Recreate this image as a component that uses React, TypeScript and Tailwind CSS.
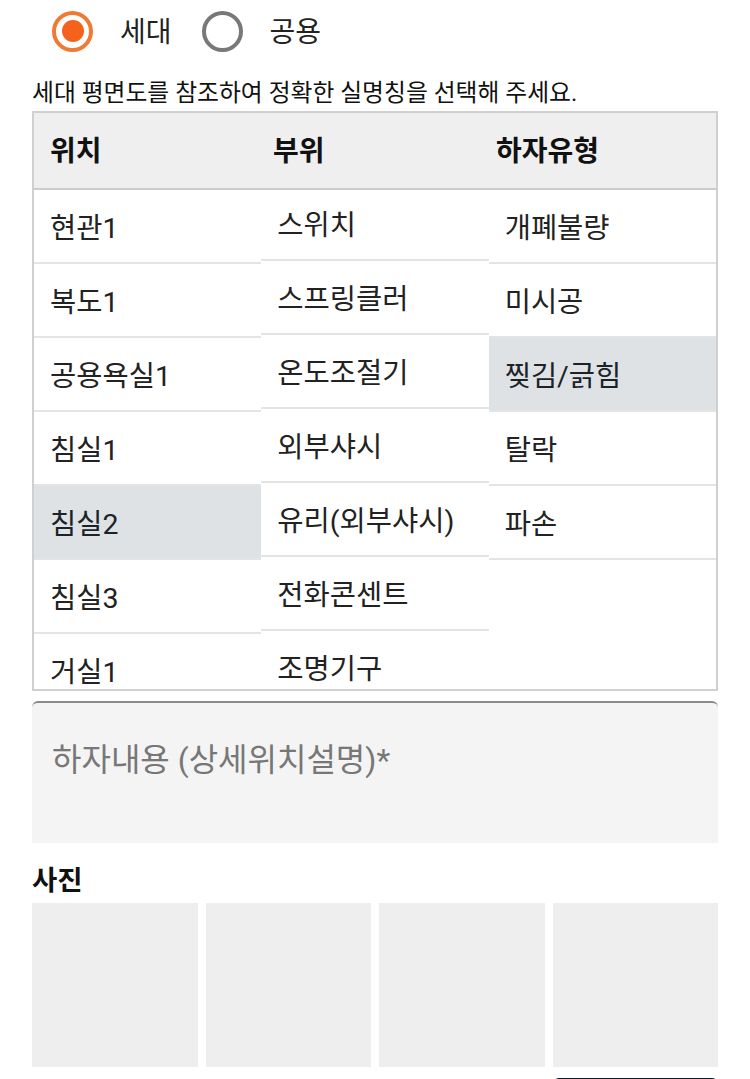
const locations = ["현관1", "복도1", "공용욕실1", "침실1", "침실2", "침실3", "거실1", "거실2"]
const parts = ["스위치", "스프링클러", "온도조절기", "외부샤시", "유리(외부샤시)", "전화콘센트", "조명기구", "콘센트"]
const defects = ["개폐불량", "미시공", "찢김/긁힘", "탈락", "파손"]

function Radio({ label, checked }: { label: string; checked?: boolean }) {
  return (
    <div className="flex items-center gap-[27px]">
      <span
        className={
          checked
            ? "flex h-[41px] w-[41px] items-center justify-center rounded-full border-[4px] border-[#f07a33]"
            : "flex h-[41px] w-[41px] items-center justify-center rounded-full border-[4px] border-[#787878]"
        }
      >
        {checked && <span className="h-[22px] w-[22px] rounded-full bg-[#f4621c]" />}
      </span>
      <span className="pt-[3px] text-[28px] leading-[34px] text-[#222]">{label}</span>
    </div>
  )
}

function Column({
  items,
  selected,
  offset,
}: {
  items: string[]
  selected?: string
  offset?: boolean
}) {
  return (
    <div className="h-full overflow-hidden">
      <ul className={offset ? "-mt-[3px]" : ""}>
        {items.map((item) => (
          <li
            key={item}
            className={
              item === selected
                ? "flex h-[74px] items-center border-b-2 border-[#e4e4e4] bg-[#dee2e5] pl-[16px] pt-[5px] text-[28.5px] leading-[36px] text-[#1c2328]"
                : "flex h-[74px] items-center border-b-2 border-[#e4e4e4] pl-[16px] pt-[5px] text-[28.5px] leading-[36px] text-[#222]"
            }
          >
            {item}
          </li>
        ))}
      </ul>
    </div>
  )
}

export default function App() {
  return (
    <div
      className="h-[1079px] overflow-hidden bg-white px-[32px]"
      style={{ fontFamily: 'Roboto, "Noto Sans CJK KR", sans-serif' }}
    >
      <div className="flex h-[62px] items-center gap-[30px] pl-[20px]">
        <Radio label="세대" checked />
        <Radio label="공용" />
      </div>

      <p className="mt-[16px] h-[33px] text-[23.8px] leading-[30px] text-[#111]">
        세대 평면도를 참조하여 정확한 실명칭을 선택해 주세요.
      </p>

      <div className="border-2 border-[#d0d0d0]">
        <div className="grid h-[77px] grid-cols-3 items-center border-b-2 border-[#cccccc] bg-[#efefef] pl-[16px] pt-[3px] text-[28px] font-bold leading-[36px] text-[#111]">
          <span>위치</span>
          <span className="pl-[1px]">부위</span>
          <span className="pl-[2px]">하자유형</span>
        </div>
        <div className="grid h-[499px] grid-cols-3">
          <Column items={locations} selected="침실2" />
          <Column items={parts} offset />
          <Column items={defects} selected="찢김/긁힘" />
        </div>
      </div>

      <div className="mt-[10px] h-[142px] rounded-t-[6px] border-t-2 border-[#8a8a8a] bg-[#f4f4f4] px-[20px] pt-[36px]">
        <span className="block text-[32px] leading-[42px] text-[#777]">하자내용 (상세위치설명)*</span>
      </div>

      <h3 className="mt-[20px] text-[27.5px] font-bold leading-[36px] text-[#111]">사진</h3>

      <div className="mt-[4px] grid grid-cols-4 gap-[8px]">
        {[0, 1, 2, 3].map((i) => (
          <div key={i} className="h-[164px] bg-[#eeeeee]" />
        ))}
      </div>

      <div className="mt-[11px] flex justify-end">
        <div className="h-[20px] w-[165px] rounded-t-[6px] bg-[#0d1b24]" />
      </div>
    </div>
  )
}
